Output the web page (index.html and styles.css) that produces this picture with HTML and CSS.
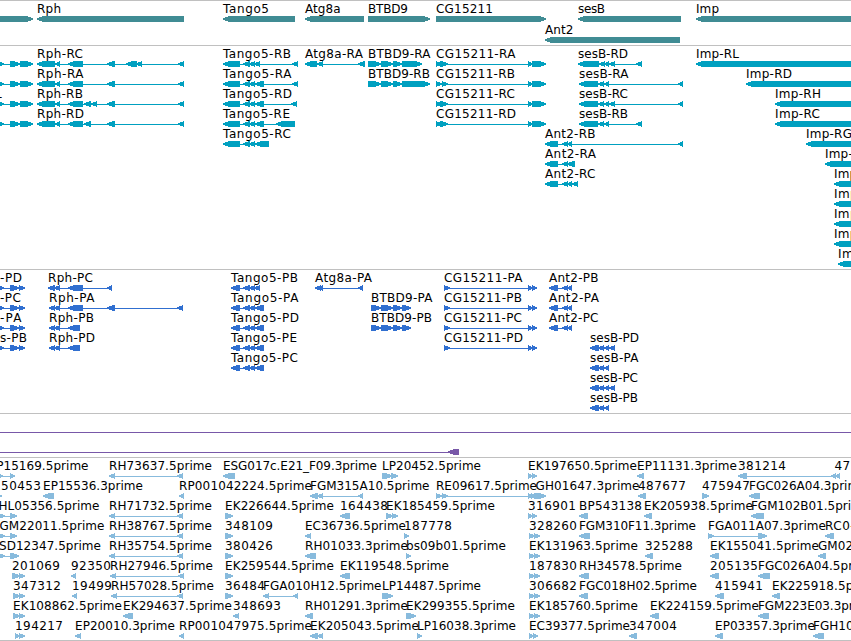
FILE: index.html
```html
<!DOCTYPE html>
<html lang="en">
<head>
    <meta charset="UTF-8">
    <meta name="viewport" content="width=device-width, initial-scale=1.0">
    <title>Genome Browser</title>
    <link rel="stylesheet" href="styles.css">
</head>
<body>
    <main class="browser">
        <section class="track genes"><svg id="genes"></svg></section>
        <section class="track transcripts"><svg id="transcripts"></svg></section>
        <section class="track proteins"><svg id="proteins"></svg></section>
        <section class="track alignments"><svg id="alignments"></svg></section>
        <section class="track ests"><svg id="ests"></svg></section>
    </main>
    <script src="tracks.js"></script>
</body>
</html>
```

FILE: styles.css
```css
body {
    margin: 0;
    background-color: #ffffff;
    overflow: hidden;
}

.browser {
    display: flex;
    flex-direction: column;
    width: 100%;
}

.track {
    box-sizing: border-box;
    border-top: 1px solid #c0c0c0;
    overflow: hidden;
}

.track svg {
    display: block;
    width: 100%;
    height: 100%;
}

.genes {
    height: 45px;
    color: #408c94;
}

.transcripts {
    height: 224px;
    color: #00a0c0;
}

.proteins {
    height: 144px;
    color: #306fd0;
}

.alignments {
    height: 44px;
    color: #7858a8;
}

.ests {
    height: 184px;
    color: #88bbdd;
    border-bottom: 1px solid #c0c0c0;
}

.exon,
.intron {
    fill: currentColor;
    shape-rendering: crispEdges;
}

.label {
    font-family: "DejaVu Sans", sans-serif;
    font-size: 12px;
    fill: #000000;
}
```

FILE: tracks.js
```js
const SVG_NS = "http://www.w3.org/2000/svg";

// label widths per character, digits are 8
const charWidths = {
    A: 8.5, B: 8, C: 8, D: 9, E: 7, F: 6, G: 9, H: 9, I: 4, K: 8, L: 6, M: 10,
    P: 7, R: 8, S: 7, T: 7, a: 7, b: 8, c: 6, e: 7, g: 8, h: 8, i: 3, m: 11,
    n: 8, o: 8, p: 8, r: 5, s: 6, t: 4, ".": 4, "-": 6, "_": 6
};

// [row, strand, label, exons, label x when it differs from the start]
const genes = [
    [0, ">", "", [[-10, 33]]],
    [0, "<", "Rph", [[37, 184]]],
    [0, "<", "Tango5", [[223, 295]]],
    [0, "<", "Atg8a", [[305, 364]]],
    [0, ">", "BTBD9", [[368, 430]]],
    [0, ">", "CG15211", [[436, 546]]],
    [0, "<", "sesB", [[578, 681]]],
    [0, "<", "Imp", [[696, 900]]],
    [1, "<", "Ant2", [[545, 680]]]
];

const transcripts = [
    [0, ">", "", [[-10, 4], [10, 20], [20, 33]]],
    [1, ">", "", [[-10, 4], [10, 20], [20, 33]]],
    [2, ">", "L", [[-10, 4], [10, 20], [20, 33]], -5],
    [3, ">", "", [[-10, 4], [10, 20], [20, 33]]],
    [0, "<", "Rph-RC", [[37, 55], [55, 60], [68, 83], [107, 115], [126, 137], [136, 142], [178, 184]]],
    [1, "<", "Rph-RA", [[37, 55], [55, 60], [68, 83], [107, 115], [178, 184]]],
    [2, "<", "Rph-RB", [[37, 55], [55, 60], [68, 83], [84, 91], [91, 97], [107, 115], [178, 184]]],
    [3, "<", "Rph-RD", [[37, 55], [55, 60], [68, 83], [84, 91], [107, 115], [178, 184]]],
    [0, "<", "Tango5-RB", [[223, 240], [243, 250], [249, 255], [254, 260], [292, 298]]],
    [1, "<", "Tango5-RA", [[223, 240], [243, 250], [249, 255], [255, 264], [292, 298]]],
    [2, "<", "Tango5-RD", [[223, 240], [243, 250], [249, 255], [255, 264], [291, 297]]],
    [3, "<", "Tango5-RE", [[223, 240], [243, 250], [249, 255], [255, 264], [276, 295]]],
    [4, "<", "Tango5-RC", [[223, 240], [243, 250], [249, 255], [255, 269]]],
    [0, "<", "Atg8a-RA", [[305, 317], [317, 323], [358, 365]]],
    [0, ">", "BTBD9-RA", [[368, 381], [381, 393], [393, 402], [402, 422]]],
    [1, ">", "BTBD9-RB", [[368, 381], [381, 393], [393, 402], [402, 430]]],
    [0, ">", "CG15211-RA", [[436, 442], [440, 448], [528, 533], [532, 546]]],
    [1, ">", "CG15211-RB", [[436, 442], [442, 448], [528, 533], [532, 546]]],
    [2, ">", "CG15211-RC", [[436, 442], [440, 448], [528, 533], [532, 546]]],
    [3, ">", "CG15211-RD", [[436, 442], [440, 448], [528, 533], [532, 546]]],
    [0, "<", "sesB-RD", [[578, 599], [599, 605], [604, 609], [609, 615], [636, 642]]],
    [1, "<", "sesB-RA", [[579, 598], [598, 604], [604, 609], [678, 683]]],
    [2, "<", "sesB-RC", [[579, 598], [598, 604], [604, 609], [609, 615], [678, 683]]],
    [3, "<", "sesB-RB", [[579, 598], [598, 604], [604, 609], [636, 642]]],
    [4, "<", "Ant2-RB", [[545, 558], [562, 568], [567, 572], [678, 683]]],
    [5, "<", "Ant2-RA", [[545, 558], [562, 568], [567, 575]]],
    [6, "<", "Ant2-RC", [[545, 558], [562, 568], [567, 572], [572, 578]]],
    [0, "<", "Imp-RL", [[696, 900]]],
    [1, "<", "Imp-RD", [[746, 900]]],
    [2, "<", "Imp-RH", [[775, 900]]],
    [3, "<", "Imp-RC", [[775, 900]]],
    [4, "<", "Imp-RG", [[806, 900]]],
    [5, "<", "Imp-RE", [[825, 900]]],
    [6, "<", "Imp-RF", [[834, 900]]],
    [7, "<", "Imp-RI", [[834, 900]]],
    [8, "<", "Imp-RK", [[834, 900]]],
    [9, "<", "Imp-RB", [[834, 900]]],
    [10, "<", "Imp-RA", [[838, 900]]]
];

const proteins = [
    [0, ">", "-PD", [[-5, 4], [10, 19], [19, 25]], 0],
    [1, ">", "-PC", [[-5, 4], [10, 19], [19, 25]], 0],
    [2, ">", "-PA", [[-5, 4], [10, 19], [19, 25]], 0],
    [3, ">", "s-PB", [[-5, 4], [10, 19], [19, 25]], 0],
    [0, "<", "Rph-PC", [[48, 55], [54, 60], [68, 83], [107, 112]]],
    [1, "<", "Rph-PA", [[49, 55], [54, 60], [68, 83], [107, 115], [177, 183]]],
    [2, "<", "Rph-PB", [[49, 55], [54, 60], [68, 80]]],
    [3, "<", "Rph-PD", [[49, 55], [54, 60], [68, 80]]],
    [0, "<", "Tango5-PB", [[231, 240], [243, 250], [249, 255], [254, 260]]],
    [1, "<", "Tango5-PA", [[231, 240], [243, 250], [249, 255], [255, 264]]],
    [2, "<", "Tango5-PD", [[231, 240], [243, 250], [249, 255], [255, 264]]],
    [3, "<", "Tango5-PE", [[231, 240], [243, 250], [249, 255], [255, 264]]],
    [4, "<", "Tango5-PC", [[231, 240], [243, 250], [249, 255], [255, 264]]],
    [0, "<", "Atg8a-PA", [[315, 321], [318, 323], [358, 363]]],
    [1, ">", "BTBD9-PA", [[371, 381], [381, 393], [393, 402], [402, 411]]],
    [2, ">", "BTBD9-PB", [[371, 381], [381, 393], [393, 402], [402, 411]]],
    [0, ">", "CG15211-PA", [[444, 450], [528, 533], [532, 537]]],
    [1, ">", "CG15211-PB", [[444, 450], [528, 533], [532, 537]]],
    [2, ">", "CG15211-PC", [[444, 450], [528, 533], [532, 537]]],
    [3, ">", "CG15211-PD", [[444, 450], [528, 533], [532, 537]]],
    [0, "<", "Ant2-PB", [[549, 558], [562, 568], [567, 572]]],
    [1, "<", "Ant2-PA", [[549, 558], [562, 568], [567, 572]]],
    [2, "<", "Ant2-PC", [[549, 558], [562, 568], [567, 572]]],
    [3, "<", "sesB-PD", [[590, 599], [598, 604], [604, 609], [609, 615]]],
    [4, "<", "sesB-PA", [[590, 599], [598, 604], [604, 609]]],
    [5, "<", "sesB-PC", [[590, 599], [598, 604], [604, 609], [609, 615]]],
    [6, "<", "sesB-PB", [[590, 599], [598, 604], [604, 609]]]
];

const alignments = [
    [0, "<", "", [[-20, -10], [890, 900]]],
    [1, "<", "", [[-20, -10], [448, 459]]]
];

const ests = [
    [0, ">", "LP15169.5prime", [[-5, 3], [10, 15]], -10.5],
    [0, "<", "RH73637.5prime", [[109, 115], [177, 183]]],
    [0, "<", "ESG017c.E21_F09.3prime", [[223, 235]]],
    [0, ">", "LP20452.5prime", [[382, 392], [391, 398]]],
    [0, ">", "EK197650.5prime", [[528, 533], [532, 537]]],
    [0, "<", "EP11131.3prime", [[637, 644]]],
    [0, "<", "381214", [[738, 747], [831, 836], [835, 840]]],
    [0, "<", "471236", [], 834.5],
    [1, ">", "150453", [[-5, 2]], -7],
    [1, "<", "EP15536.3prime", [[43, 54]]],
    [1, "<", "RP001042224.5prime", [[179, 184]]],
    [1, "<", "FGM315A10.5prime", [[310, 318], [317, 323], [358, 363]]],
    [1, ">", "RE09617.5prime", [[436, 442], [442, 448], [528, 533], [531, 537]]],
    [1, ">", "GH01647.3prime", [[534, 546]], 535.5],
    [1, "<", "487677", [[638, 646]]],
    [1, ">", "475947", [[702, 709]]],
    [1, "<", "FGC026A04.3prime", [[749, 760]]],
    [2, ">", "HL05356.5prime", [[-2, 5], [10, 17]], -1.5],
    [2, "<", "RH71732.5prime", [[109, 115], [177, 183]]],
    [2, ">", "EK226644.5prime", [[225, 233]]],
    [2, "<", "164438", [[340, 350]]],
    [2, ">", "EK185459.5prime", [[386, 393], [392, 398]]],
    [2, ">", "316901", [[528, 533], [532, 537]]],
    [2, "<", "BP543138", [[579, 588]]],
    [2, "<", "EK205938.5prime", [[644, 652]]],
    [2, "<", "FGM102B01.5prime", [[751, 764]]],
    [3, ">", "GM22011.5prime", [[-2, 5], [10, 17]], -0.5],
    [3, "<", "RH38767.5prime", [[109, 115], [177, 183]]],
    [3, ">", "348109", [[225, 233]]],
    [3, "<", "EC36736.5prime", [[305, 311]]],
    [3, ">", "187778", [[404, 409]]],
    [3, ">", "328260", [[529, 535], [534, 540]]],
    [3, "<", "FGM310F11.3prime", [[579, 590]]],
    [3, ">", "FGA011A07.3prime", [[708, 714], [758, 767]]],
    [3, "<", "RC0-013", [[825, 834]]],
    [4, ">", "SD12347.5prime", [[-2, 5], [10, 19]], -1],
    [4, "<", "RH35754.5prime", [[109, 115], [177, 183]]],
    [4, ">", "380426", [[225, 233]]],
    [4, "<", "RH01033.3prime", [[305, 316]]],
    [4, ">", "bs09b01.5prime", [[406, 411]]],
    [4, ">", "EK131963.5prime", [[529, 535], [534, 540]]],
    [4, "<", "325288", [[645, 653]]],
    [4, "<", "EK155041.5prime", [[710, 719]]],
    [4, "<", "GM02209.5prime", [[818, 826]]],
    [5, ">", "201069", [[12, 20], [19, 25]]],
    [5, "<", "92350", [[71, 76]]],
    [5, "<", "RH27946.5prime", [[110, 116], [178, 184]]],
    [5, ">", "EK259544.5prime", [[225, 233]]],
    [5, "<", "EK119548.5prime", [[340, 350]]],
    [5, ">", "187830", [[529, 535], [534, 540]]],
    [5, "<", "RH34578.5prime", [[579, 589]]],
    [5, "<", "205135", [[710, 719]]],
    [5, "<", "FGC026A04.5prime", [[758, 770]]],
    [6, ">", "347312", [[13, 20], [19, 25]]],
    [6, "<", "19499", [[72, 77]]],
    [6, "<", "RH57028.5prime", [[111, 117], [177, 183]]],
    [6, ">", "36484", [[225, 233]]],
    [6, "<", "FGA010H12.5prime", [[263, 269], [293, 298]]],
    [6, ">", "LP14487.5prime", [[382, 393]]],
    [6, ">", "306682", [[529, 535], [534, 540]]],
    [6, "<", "FGC018H02.5prime", [[579, 588]]],
    [6, "<", "415941", [[715, 724]]],
    [6, "<", "EK225918.5prime", [[772, 780]]],
    [7, ">", "EK108862.5prime", [[13, 20], [19, 25]]],
    [7, "<", "EK294637.5prime", [[123, 133]]],
    [7, "<", "348693", [[233, 239]]],
    [7, "<", "RH01291.3prime", [[305, 313]]],
    [7, ">", "EK299355.5prime", [[406, 416]]],
    [7, ">", "EK185760.5prime", [[529, 535], [534, 540]]],
    [7, "<", "EK224159.5prime", [[650, 659]]],
    [7, "<", "FGM223E03.3prime", [[758, 769]]],
    [8, ">", "194217", [[15, 20], [19, 25]]],
    [8, "<", "EP20010.3prime", [[75, 81]]],
    [8, "<", "RP001047975.5prime", [[179, 184]]],
    [8, "<", "EK205043.5prime", [[310, 318], [317, 323]]],
    [8, ">", "LP16038.3prime", [[417, 422]]],
    [8, ">", "EC39377.5prime", [[529, 534], [533, 538]]],
    [8, "<", "347004", [[629, 637]]],
    [8, "<", "EP03357.3prime", [[715, 723]]],
    [8, "<", "FGH10122.5prime", [[813, 824]]]
];

function addShape(svg, name, attrs) {
    const el = document.createElementNS(SVG_NS, name);
    for (const key in attrs) {
        el.setAttribute(key, attrs[key]);
    }
    svg.appendChild(el);
    return el;
}

function labelWidth(text) {
    let width = 0;
    for (const ch of text) {
        width += charWidths[ch] || 8;
    }
    return width;
}

// stepped arrow head, 2px high at the tip and 6px at the body
function exonPath(start, end, y, strand) {
    const head = Math.min(5, end - start - 1);
    const tip = strand === "<" ? start : end;
    const tail = strand === "<" ? end : start;
    const dir = strand === "<" ? 1 : -1;
    const a = tip + 2 * dir;
    const b = tip + head * dir;
    return `M${tip} ${y + 2}H${a}V${y + 1}H${b}V${y}H${tail}V${y + 6}H${b}V${y + 5}H${a}V${y + 4}H${tip}Z`;
}

function drawTrack(id, features, rowHeight) {
    const svg = document.getElementById(id);
    features.forEach(function(feature) {
        const [row, strand, label, exons, labelX] = feature;
        const top = row * rowHeight;
        const y = top + 15;

        if (exons.length > 1) {
            const start = exons[0][0];
            const end = exons[exons.length - 1][1];
            addShape(svg, "rect", { class: "intron", x: start, y: y + 3, width: end - start, height: 1 });
        }
        exons.forEach(function(exon) {
            addShape(svg, "path", { class: "exon", d: exonPath(exon[0], exon[1], y, strand) });
        });
        if (label) {
            const x = labelX === undefined ? exons[0][0] : labelX;
            const text = addShape(svg, "text", { class: "label", x: x, y: top + 12, textLength: labelWidth(label) });
            text.textContent = label;
        }
    });
}

drawTrack("genes", genes, 21);
drawTrack("transcripts", transcripts, 20);
drawTrack("proteins", proteins, 20);
drawTrack("alignments", alignments, 20);
drawTrack("ests", ests, 20);
```
